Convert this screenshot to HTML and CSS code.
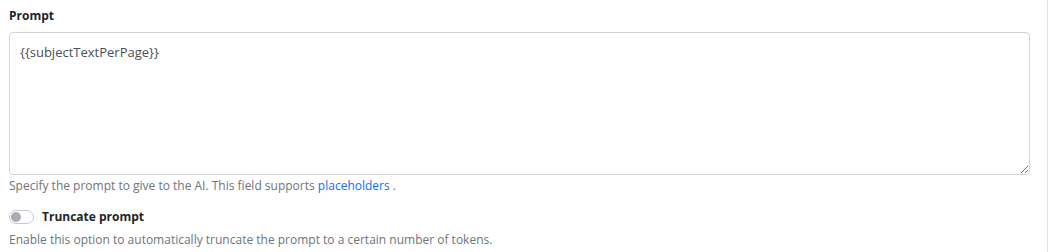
FILE: index.html
```html
<!DOCTYPE html>
<html lang="en">
<head>
    <meta charset="UTF-8">
    <title>Prompt settings</title>
    <link rel="stylesheet" href="styles.css">
</head>
<body>

<div class="field">
    <label class="field-label" for="prompt">Prompt</label>
    <textarea id="prompt" class="prompt-input">{{subjectTextPerPage}}</textarea>
    <div class="help">Specify the prompt to give to the AI. This field supports <a href="#">placeholders</a> .</div>
</div>

<div class="field toggle-field">
    <label class="toggle-row">
        <span class="switch"><span class="knob"></span></span>
        <span class="toggle-label">Truncate prompt</span>
    </label>
    <div class="help toggle-help">Enable this option to automatically truncate the prompt to a certain number of tokens.</div>
</div>

<div class="scroll-edge"></div>

</body>
</html>
```

FILE: styles.css
```css
body {
    margin: 0;
    padding: 7px 19px 0 9px;
    font-family: "Open Sans", "Noto Sans", sans-serif;
    font-size: 12px;
    color: #212529;
    background: #fff;
}

.field-label {
    display: block;
    font-weight: bold;
    font-size: 12px;
    line-height: 18px;
    margin-bottom: 7px;
}

.prompt-input {
    display: block;
    box-sizing: border-box;
    width: 100%;
    height: 143px;
    margin: 0;
    padding: 10px 10px;
    border: 1px solid #ced4da;
    border-radius: 4px;
    font-family: inherit;
    font-size: 13px;
    color: #495057;
    resize: vertical;
}

.help {
    color: #6c757d;
    margin-top: 2px;
}

.help a {
    color: #0d6efd;
    text-decoration: none;
}

.toggle-field {
    margin-top: 14px;
}

.toggle-row {
    display: flex;
    align-items: center;
    gap: 8px;
    font-weight: bold;
    font-size: 12px;
    line-height: 18px;
    color: #212529;
}

.toggle-help {
    margin-top: 5px;
}

.switch {
    box-sizing: border-box;
    width: 25px;
    height: 14px;
    border: 1px solid #c6cad0;
    border-radius: 7px;
    padding: 1px;
    display: flex;
    align-items: center;
}

.knob {
    width: 10px;
    height: 10px;
    border-radius: 50%;
    background: #a8adb3;
}

.scroll-edge {
    position: fixed;
    top: 0;
    right: 1px;
    width: 1px;
    height: 100%;
    background: #dde1e5;
}
```
